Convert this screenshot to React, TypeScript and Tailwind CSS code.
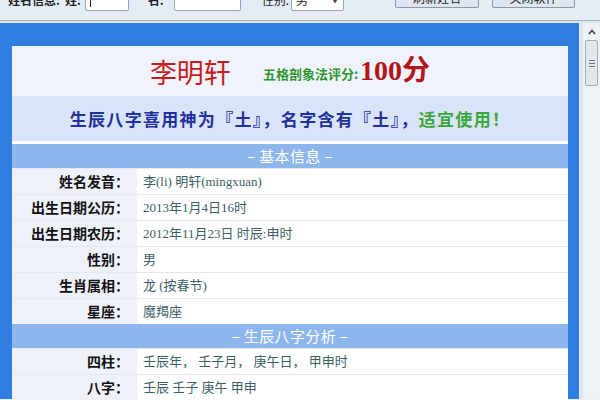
import React from "react";

const basicInfo = [
  { label: "姓名发音：", value: "李(li) 明轩(mingxuan)" },
  { label: "出生日期公历：", value: "2013年1月4日16时" },
  { label: "出生日期农历：", value: "2012年11月23日 时辰:申时" },
  { label: "性别：", value: "男" },
  { label: "生肖属相：", value: "龙 (按春节)" },
  { label: "星座：", value: "魔羯座" },
];

const baziInfo = [
  { label: "四柱：", value: "壬辰年， 壬子月， 庚午日， 甲申时" },
  { label: "八字：", value: "壬辰 壬子 庚午 甲申" },
];

const SectionHeader = ({ title }: { title: string }) => (
  <div className="h-[24px] bg-[#8db6ec] flex items-center justify-center text-white text-[15px] tracking-wide">
    – {title} –
  </div>
);

const InfoRow = ({ label, value }: { label: string; value: string }) => (
  <div className="flex h-[25px] bg-white">
    <div className="w-[125px] bg-[#eef1fa] flex items-center justify-end pr-[8px] text-[14px] font-bold text-[#111]">
      {label}
    </div>
    <div className="flex-1 flex items-center pl-[6px] text-[13px] text-[#3b5f66] font-['Liberation_Serif','Noto_Sans_CJK_SC',serif]">
      {value}
    </div>
  </div>
);

export default function App() {
  return (
    <div className="w-[600px] h-[400px] overflow-hidden bg-[#e6edf5] font-['Noto_Sans_CJK_SC','Liberation_Sans',sans-serif]">
      {/* toolbar */}
      <div className="h-[21px] bg-[#e5ecf5] border-b border-[#a7b1bc] overflow-hidden">
        <div className="-mt-[12px] h-[24px] flex items-center text-[12px] text-[#222]">
          <span className="ml-[8px] font-bold">姓名信息:</span>
          <span className="ml-[5px] font-bold">姓:</span>
          <div className="ml-[4px] w-[44px] h-[22px] bg-white border border-[#9aa6b2] rounded-[2px] flex items-end pl-[4px] pb-[3px]">
            <span className="w-px h-[10px] bg-[#222]" />
          </div>
          <span className="ml-[19px] font-bold">名:</span>
          <div className="ml-[10px] w-[67px] h-[22px] bg-white border border-[#9aa6b2] rounded-[2px]" />
          <span className="ml-[21px]">性别:</span>
          <div className="ml-[2px] w-[53px] h-[22px] bg-white border border-[#9aa6b2] rounded-[2px] flex items-center justify-between px-[4px]">
            <span>男</span>
            <span className="text-[8px] text-[#444]">▼</span>
          </div>
          <button className="ml-[51px] -mt-[4px] w-[84px] h-[20px] bg-[#dfe6ef] border border-[#8d99a6] rounded-[2px] text-[12px]">
            刷新姓名
          </button>
          <button className="ml-[13px] -mt-[4px] w-[83px] h-[20px] bg-[#dfe6ef] border border-[#8d99a6] rounded-[2px] text-[12px]">
            关闭软件
          </button>
        </div>
      </div>
      <div className="h-[2px] bg-[#dde5ee]" />

      {/* body */}
      <div className="flex h-[376px]">
        <div className="w-[579px] bg-[#2e7ddf] pl-[12px] pr-[11px] pt-[23px]">
          <div className="bg-white flex flex-col">
            <div className="h-[50px] bg-[#eff3fb] flex items-center justify-center">
              <span className="text-[27px] text-[#c81c1c] leading-none">李明轩</span>
              <span className="ml-[32px] mt-[6px] text-[13px] font-bold text-[#2f962f]">五格剖象法评分:</span>
              <span className="ml-[2px] text-[28px] font-bold text-[#b3151b] leading-none font-['Liberation_Serif','Noto_Sans_CJK_SC',serif]">
                100分
              </span>
            </div>
            <div className="h-[45px] bg-[#dae4f8] flex items-center justify-center text-[17px] font-bold text-[#22309c] tracking-[1.3px]">
              生辰八字喜用神为『土』，名字含有『土』，
              <span className="text-[#3aa63a]">适宜使用！</span>
            </div>
            <div className="h-[3px] bg-white" />
            <SectionHeader title="基本信息" />
            <div className="flex flex-col gap-px bg-[#e3e9f2] pt-px">
              {basicInfo.map((r) => (
                <InfoRow key={r.label} label={r.label} value={r.value} />
              ))}
            </div>
            <SectionHeader title="生辰八字分析" />
            <div className="flex flex-col gap-px bg-[#e3e9f2] pt-px">
              {baziInfo.map((r) => (
                <InfoRow key={r.label} label={r.label} value={r.value} />
              ))}
            </div>
          </div>
        </div>

        {/* scrollbar */}
        <div className="w-[21px] bg-[#eef2f6] border-l-[4px] border-[#dfe8f2] flex flex-col items-center">
          <svg width="8" height="6" viewBox="0 0 8 6" className="mt-[6px]">
            <path d="M1 5 L4 1.5 L7 5" fill="none" stroke="#333" strokeWidth="1.4" />
          </svg>
          <div className="mt-[5px] w-[13px] h-[46px] rounded-[2px] border border-[#a5adb7] bg-[#e3e7ec] flex flex-col items-center justify-center gap-[2px]">
            <span className="w-[6px] h-px bg-[#69727d]" />
            <span className="w-[6px] h-px bg-[#69727d]" />
            <span className="w-[6px] h-px bg-[#69727d]" />
          </div>
        </div>
      </div>
    </div>
  );
}
